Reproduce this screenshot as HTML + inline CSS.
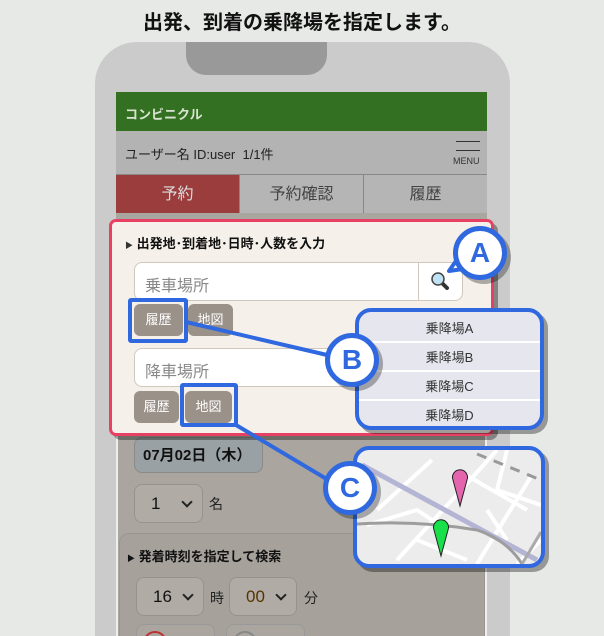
<!DOCTYPE html>
<html><head><meta charset="utf-8"><style>
*{box-sizing:border-box;margin:0;padding:0}
html,body{width:604px;height:636px;overflow:hidden}
body{background:#e6e9e6;font-family:"Liberation Sans","Noto Sans CJK JP",sans-serif;position:relative}
.a{position:absolute}
.title{left:0;width:604px;top:6px;text-align:center;font-size:20px;font-weight:bold;color:#111}
.phone{left:95px;top:42px;width:415px;height:594px;background:#cbcbcb;border-radius:42px 42px 0 0}
.notch{left:186px;top:42px;width:141px;height:33px;background:#999;border-radius:0 0 20px 20px}
.screen{left:116px;top:92px;width:371px;height:544px;background:#aaa69f;border:2px solid #eee;border-bottom:none}
.btn{background:#9a9189;color:#fff;font-size:13px;border-radius:6px;text-align:center;line-height:32px}
.sel{background:#b0aca5;border:1px solid #989389;border-radius:8px;font-size:17px;color:#111;padding-left:16px;line-height:37px}
.sel:after{content:"";position:absolute;right:11px;top:13px;width:6px;height:6px;border-right:2.5px solid #222;border-bottom:2.5px solid #222;transform:rotate(45deg)}
.circ{width:54px;height:54px;border-radius:50%;background:#fff;border:5px solid #2f68df;color:#2f68df;font-weight:bold;font-size:28px;text-align:center;line-height:44px;box-shadow:4px 4px 0 rgba(0,0,0,.3)}
.row{height:29px;line-height:29px;text-align:center;font-size:13px;color:#333;border-bottom:2px solid #fff}
</style></head><body>
<div class="a title">出発、到着の乗降場を指定します。</div>
<div class="a phone"></div>
<div class="a notch"></div>
<div class="a screen"></div>
<div class="a" style="left:116px;top:92px;width:371px;height:39px;background:#347022;color:#d8e4d0;font-size:13px;font-weight:bold;padding:12px 0 0 9px">コンビニクル</div>
<div class="a" style="left:116px;top:131px;width:371px;height:43px;background:#b3b3b3;font-size:13px;color:#222;padding:13px 0 0 9px">ユーザー名 ID:user&nbsp; 1/1件</div>
<div class="a" style="left:456px;top:141px;width:24px;border-top:1.5px solid #333"></div>
<div class="a" style="left:456px;top:150px;width:24px;border-top:1.5px solid #333"></div>
<div class="a" style="left:453px;top:156px;font-size:9px;color:#333">MENU</div>
<div class="a" style="left:116px;top:174px;width:123px;height:39px;background:#9b3d3d;color:#ddd;font-size:16px;text-align:center;line-height:39px;border-top:1px solid #888">予約</div>
<div class="a" style="left:239px;top:174px;width:125px;height:39px;background:#b5b5b5;color:#444;font-size:16px;text-align:center;line-height:39px;border:1px solid #888;border-bottom:none">予約確認</div>
<div class="a" style="left:364px;top:174px;width:123px;height:39px;background:#b5b5b5;color:#444;font-size:16px;text-align:center;line-height:39px;border-top:1px solid #888">履歴</div>
<div class="a" style="left:116px;top:213px;width:371px;height:8px;background:#a9a59f"></div>

<div class="a" style="left:134px;top:437px;width:129px;height:36px;background:#9aa1a4;border:1px solid #8a8a88;border-radius:8px;font-weight:bold;font-size:15px;color:#111;padding:6px 0 0 8px">07月02日（木）</div>
<div class="a sel" style="left:134px;top:484px;width:69px;height:39px">1</div>
<div class="a" style="left:209px;top:494px;font-size:14px;color:#222">名</div>
<div class="a" style="left:119px;top:533px;width:366px;height:120px;background:#a6a29b;border:1px solid #9a968f;border-radius:10px"></div>
<div class="a" style="left:127px;top:546px;font-size:13px;font-weight:bold;color:#111"><span style="font-size:8px">▶</span> 発着時刻を指定して検索</div>
<div class="a sel" style="left:136px;top:577px;width:68px;height:39px">16</div>
<div class="a" style="left:210px;top:588px;font-size:14px;color:#222">時</div>
<div class="a sel" style="left:229px;top:577px;width:68px;height:39px;color:#553300">00</div>
<div class="a" style="left:304px;top:588px;font-size:14px;color:#222">分</div>
<div class="a" style="left:136px;top:624px;width:79px;height:30px;border:1px solid #999;border-radius:8px;background:#aaa69f"></div>
<div class="a" style="left:143px;top:631px;width:24px;height:24px;border:2px solid #b33;border-radius:50%"></div>
<div class="a" style="left:226px;top:624px;width:79px;height:30px;border:1px solid #999;border-radius:8px;background:#aaa69f"></div>
<div class="a" style="left:233px;top:631px;width:24px;height:24px;border:2px solid #888;border-radius:50%"></div>

<div class="a" style="left:113px;top:223px;width:385px;height:217px;background:rgba(0,0,0,.35);border-radius:8px"></div>
<div class="a" style="left:109px;top:219px;width:385px;height:217px;background:#f5f1ea;border:3px solid #e84063;border-radius:7px"></div>
<div class="a" style="left:125px;top:233px;font-size:13px;font-weight:bold;color:#111"><span style="font-size:8px;color:#333">▶</span> 出発地･到着地･日時･人数を入力</div>
<div class="a" style="left:134px;top:262px;width:329px;height:39px;background:#fff;border:1px solid #d0c8bc;border-radius:8px;font-size:16px;color:#888;padding:9px 0 0 10px">乗車場所</div>
<div class="a" style="left:418px;top:263px;width:1px;height:37px;background:#d0c8bc"></div>
<svg class="a" style="left:430px;top:271px" width="20" height="20" viewBox="0 0 20 20"><line x1="11" y1="11" x2="17" y2="17" stroke="#333" stroke-width="4" stroke-linecap="round"/><circle cx="8" cy="8" r="6" fill="#bfe3f5" stroke="#444" stroke-width="1.5"/></svg>
<div class="a btn" style="left:134px;top:304px;width:49px;height:32px">履歴</div>
<div class="a btn" style="left:188px;top:304px;width:45px;height:32px">地図</div>
<div class="a" style="left:134px;top:348px;width:329px;height:39px;background:#fff;border:1px solid #d0c8bc;border-radius:8px;font-size:16px;color:#888;padding:9px 0 0 10px">降車場所</div>
<div class="a btn" style="left:134px;top:391px;width:45px;height:32px">履歴</div>
<div class="a btn" style="left:185px;top:391px;width:47px;height:32px">地図</div>

<svg class="a" style="left:0;top:0" width="604" height="636"><line x1="186" y1="322" x2="340" y2="358" stroke="#2f68df" stroke-width="4"/><line x1="236" y1="425" x2="340" y2="487" stroke="#2f68df" stroke-width="4"/></svg>
<div class="a" style="left:128px;top:298px;width:60px;height:45px;border:4px solid #2f68df;border-radius:3px"></div>
<div class="a" style="left:180px;top:383px;width:58px;height:44px;border:4px solid #2f68df;border-radius:3px"></div>

<div class="a" style="left:359px;top:312px;width:189px;height:122px;background:rgba(0,0,0,.35);border-radius:16px"></div>
<div class="a" style="left:355px;top:308px;width:189px;height:122px;background:#e6e7ee;border:4px solid #2f68df;border-radius:16px;overflow:hidden;padding-top:2px">
<div class="row">乗降場A</div><div class="row">乗降場B</div><div class="row">乗降場C</div><div class="row" style="border:none">乗降場D</div></div>

<div class="a" style="left:357px;top:450px;width:192px;height:122px;background:rgba(0,0,0,.35);border-radius:16px"></div>
<div class="a" style="left:353px;top:446px;width:192px;height:122px;background:#ececec;border:4px solid #2f68df;border-radius:16px;overflow:hidden">
<svg width="184" height="114" viewBox="0 0 184 114" style="display:block">
<g stroke="#fff" stroke-width="4" fill="none">
<path d="M20 60 L75 10 M40 110 L95 50 L140 0 M10 75 L60 60 L90 80 M60 90 L110 110 M100 20 L170 60 M150 0 L140 40 L184 55 M175 25 L120 114 M184 90 L160 114 M130 60 L150 90"/>
</g>
<path d="M5 15 L180 110" stroke="#b4b5d4" stroke-width="5" fill="none"/>
<path d="M0 74 Q60 70 120 80 Q150 90 165 114" stroke="#9d9d9d" stroke-width="3" fill="none"/>
<path d="M184 82 L165 114" stroke="#aaa" stroke-width="3"/>
<path d="M120 4 L184 30" stroke="#999" stroke-width="3" stroke-dasharray="10 8"/>
<path d="M103 56 L96 30 A7.5 7.5 0 1 1 110 30 Z" fill="#e465ad" stroke="#222" stroke-width="1"/>
<path d="M84 106 L77 80 A7.5 7.5 0 1 1 91 80 Z" fill="#17e04a" stroke="#222" stroke-width="1"/>
</svg></div>

<svg class="a" style="left:440px;top:250px" width="40" height="30"><path d="M18 8 L9 21 L30 18" fill="#fff" stroke="#2f68df" stroke-width="4" stroke-linejoin="round"/></svg>
<div class="a circ" style="left:453px;top:226px">A</div>
<div class="a circ" style="left:325px;top:333px">B</div>
<div class="a circ" style="left:323px;top:461px">C</div>
</body></html>
